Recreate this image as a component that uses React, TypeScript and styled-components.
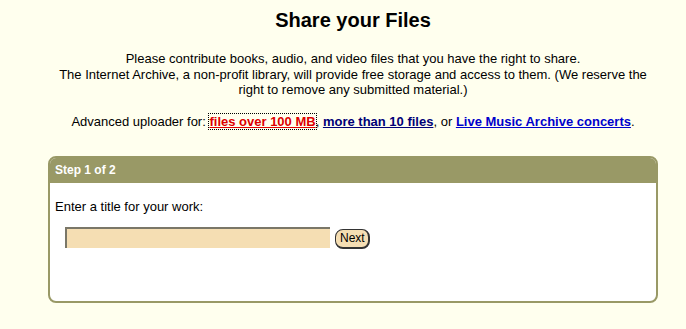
import React from "react";
import styled, { createGlobalStyle } from "styled-components";

const olive = "#999966";
const wheat = "#f5deb3";

const GlobalStyle = createGlobalStyle`
  html, body {
    margin: 0;
    padding: 0;
    background: #ffffee;
  }
  body {
    font-family: "Liberation Sans", Arial, sans-serif;
    font-size: 13px;
    color: #000;
  }
`;

const Page = styled.div`
  width: 610px;
  margin-left: 48px;
  padding-top: 8px;
`;

const Title = styled.h1`
  margin: 0;
  font-size: 20px;
  line-height: 24px;
  font-weight: bold;
  text-align: center;
`;

const Intro = styled.p`
  margin: 19px 0 0;
  line-height: 15.5px;
  text-align: center;
`;

const Advanced = styled.p`
  margin: 16px 0 0;
  line-height: 16px;
  text-align: center;
`;

const Link = styled.a<{ $tone: "focus" | "visited" | "plain" }>`
  font-weight: bold;
  text-decoration: underline;
  color: ${({ $tone }) =>
    $tone === "focus" ? "#dd0000" : $tone === "visited" ? "#000077" : "#0000cc"};
  outline: ${({ $tone }) => ($tone === "focus" ? "1px dotted #000" : "none")};
`;

const Panel = styled.section`
  margin-top: 26px;
  border: 2px solid ${olive};
  border-radius: 8px;
  background: #fff;
  height: 143px;
  overflow: hidden;
`;

const PanelHeader = styled.div`
  background: ${olive};
  color: #fff;
  font-size: 12px;
  font-weight: bold;
  height: 25px;
  line-height: 25px;
  padding-left: 5px;
`;

const PanelBody = styled.div`
  padding: 16px 5px 0;
`;

const Label = styled.div`
  line-height: 16px;
`;

const Row = styled.div`
  display: flex;
  align-items: center;
  gap: 5px;
  margin-top: 12px;
  padding-left: 10px;
`;

const TitleInput = styled.input`
  box-sizing: border-box;
  width: 265px;
  height: 21px;
  background: ${wheat};
  border: none;
  border-top: 2px solid #7a7768;
  border-left: 2px solid #7a7768;
  padding: 0 3px;
  font-family: inherit;
  font-size: 13px;
`;

const NextButton = styled.button`
  box-sizing: border-box;
  height: 20px;
  padding: 0 3px 0 4px;
  margin-top: 2px;
  background: ${wheat};
  border: 1px solid #333;
  border-right-width: 2px;
  border-bottom-width: 2px;
  border-radius: 8px;
  font-family: inherit;
  font-size: 12px;
  color: #000;
`;

export default function App() {
  return (
    <>
      <GlobalStyle />
      <Page>
        <Title>Share your Files</Title>
        <Intro>
          Please contribute books, audio, and video files that you have the right to share.
          <br />
          The Internet Archive, a non-profit library, will provide free storage and access to
          them. (We reserve the right to remove any submitted material.)
        </Intro>
        <Advanced>
          Advanced uploader for: <Link $tone="focus">files over 100 MB</Link>,{" "}
          <Link $tone="visited">more than 10 files</Link>, or{" "}
          <Link $tone="plain">Live Music Archive concerts</Link>.
        </Advanced>
        <Panel>
          <PanelHeader>Step 1 of 2</PanelHeader>
          <PanelBody>
            <Label>Enter a title for your work:</Label>
            <Row>
              <TitleInput type="text" />
              <NextButton type="button">Next</NextButton>
            </Row>
          </PanelBody>
        </Panel>
      </Page>
    </>
  );
}
